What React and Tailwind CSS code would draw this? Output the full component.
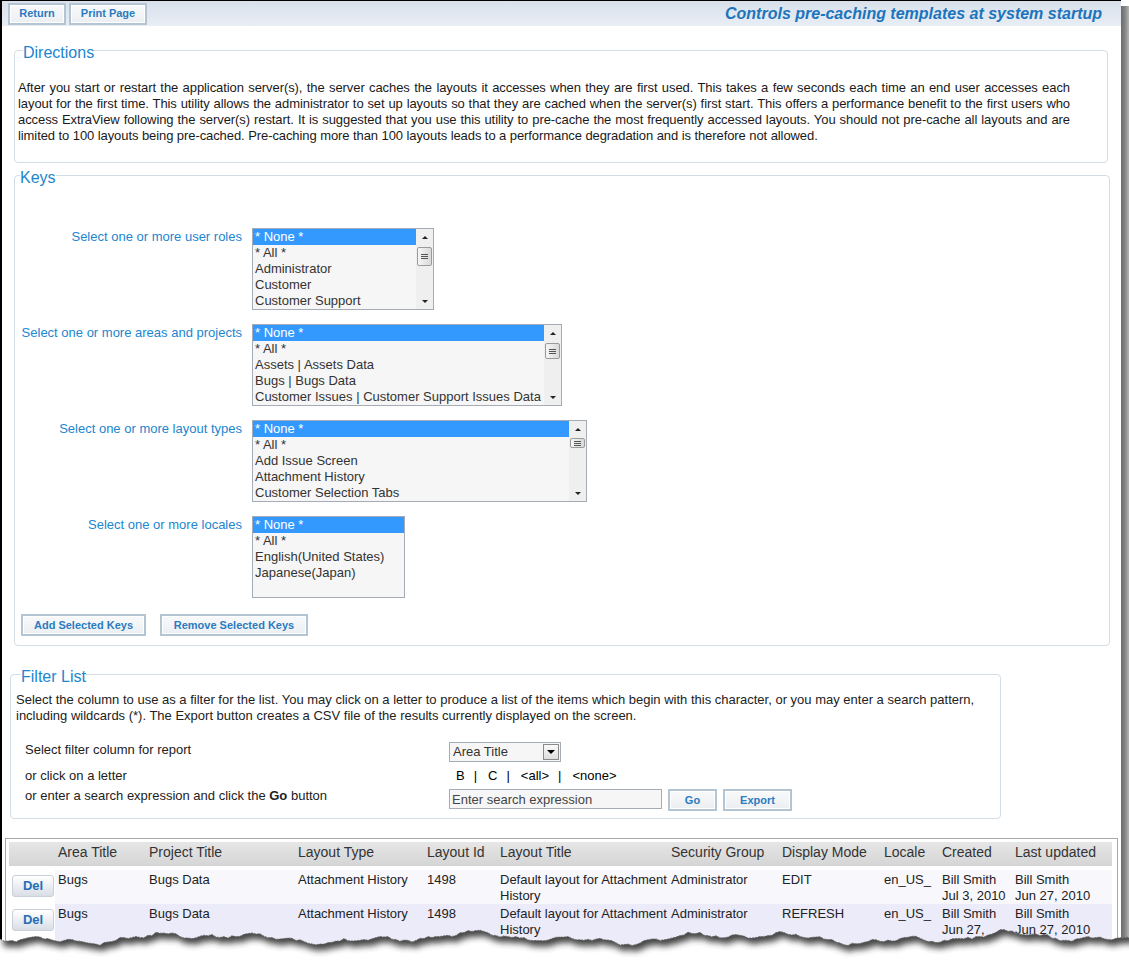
import React from 'react'

const blue = 'text-[#2086d0]'

const Btn = ({ children, className = '' }) => (
    <button
        className={`h-[22px] border-2 border-[#b3c4d2] bg-gradient-to-b from-[#f8f9fa] to-[#eceff2] text-center text-[11px] font-bold leading-none text-[#2b7bc0] shadow-[inset_0_0_0_1px_#ffffff] ${className}`}
    >
        {children}
    </button>
)

const Scrollbar = ({ thumbClass }) => (
    <div className="flex h-full w-[17px] shrink-0 flex-col items-center bg-[#efefef]">
        <div className="flex h-[16px] w-full items-center justify-center">
            <span className="block h-0 w-0 border-x-[3px] border-b-[3px] border-x-transparent border-b-[#222]" />
        </div>
        <div className={`flex w-[15px] flex-col items-center justify-center gap-[1px] rounded-[2px] border border-[#9a9a9a] bg-gradient-to-r from-[#f6f6f6] to-[#d9d9d9] ${thumbClass}`}>
            <span className="block h-px w-[7px] bg-[#555]" />
            <span className="block h-px w-[7px] bg-[#555]" />
            <span className="block h-px w-[7px] bg-[#555]" />
        </div>
        <div className="mt-auto flex h-[16px] w-full items-center justify-center">
            <span className="block h-0 w-0 border-x-[3px] border-t-[3px] border-x-transparent border-t-[#222]" />
        </div>
    </div>
)

const ListBox = ({ className, items, thumbClass }) => (
    <div className={`flex h-[82px] overflow-hidden border border-[#a5acb5] bg-[#f6f6f6] ${className}`}>
        <ul className="min-w-0 flex-1 text-[13px] leading-[16px] text-[#333]">
            {items.map((it, i) => (
                <li key={it} className={`whitespace-nowrap pl-[2px] ${i === 0 ? 'bg-[#3399ff] text-white' : ''}`}>
                    {it}
                </li>
            ))}
        </ul>
        {thumbClass && <Scrollbar thumbClass={thumbClass} />}
    </div>
)

const Legend = ({ children }) => (
    <legend className={`ml-[5px] px-0 pt-[4px] text-[16px] leading-[17px] ${blue}`}>{children}</legend>
)

const keyRows = [
    {
        label: 'Select one or more user roles',
        box: 'w-[182px]',
        thumb: 'mt-[2px] h-[19px]',
        items: ['* None *', '* All *', 'Administrator', 'Customer', 'Customer Support'],
    },
    {
        label: 'Select one or more areas and projects',
        box: 'w-[310px]',
        thumb: 'mt-[2px] h-[16px]',
        items: ['* None *', '* All *', 'Assets | Assets Data', 'Bugs | Bugs Data', 'Customer Issues | Customer Support Issues Data'],
    },
    {
        label: 'Select one or more layout types',
        box: 'w-[335px]',
        thumb: 'mt-[1px] h-[10px]',
        items: ['* None *', '* All *', 'Add Issue Screen', 'Attachment History', 'Customer Selection Tabs'],
    },
    {
        label: 'Select one or more locales',
        box: 'w-[153px]',
        thumb: null,
        items: ['* None *', '* All *', 'English(United States)', 'Japanese(Japan)'],
    },
]

const columns = [
    ['', 'w-[46px]'],
    ['Area Title', 'w-[91px]'],
    ['Project Title', 'w-[149px]'],
    ['Layout Type', 'w-[129px]'],
    ['Layout Id', 'w-[73px]'],
    ['Layout Title', 'w-[171px]'],
    ['Security Group', 'w-[111px]'],
    ['Display Mode', 'w-[102px]'],
    ['Locale', 'w-[58px]'],
    ['Created', 'w-[73px]'],
    ['Last updated', 'w-[100px]'],
]

const rows = [
    {
        bg: 'bg-[#f7f7fc]',
        cells: ['Bugs', 'Bugs Data', 'Attachment History', '1498', 'Default layout for Attachment History', 'Administrator', 'EDIT', 'en_US_', ['Bill Smith', 'Jul 3, 2010'], ['Bill Smith', 'Jun 27, 2010']],
    },
    {
        bg: 'bg-[#ebebfa]',
        cells: ['Bugs', 'Bugs Data', 'Attachment History', '1498', 'Default layout for Attachment History', 'Administrator', 'REFRESH', 'en_US_', ['Bill Smith', 'Jun 27, 2010'], ['Bill Smith', 'Jun 27, 2010']],
    },
]

const TornEdge = () => {
    let seed = 11
    const rnd = () => {
        seed = (seed * 16807) % 2147483647
        return seed / 2147483647
    }
    const pts = []
    for (let x = 0; x <= 1135; x += 4) {
        const y = 27 + 3.5 * Math.sin(x / 43) + 2.5 * Math.sin(x / 17 + 2) + 1.5 * Math.sin(x / 7) + (rnd() - 0.5) * 2.5
        pts.push(`${x === 0 ? 'M' : 'L'}${x} ${y.toFixed(1)}`)
    }
    const line = pts.join(' ')
    const below = `${line} L1135 60 L0 60 Z`
    const above = `${line} L1135 -30 L0 -30 Z`
    return (
        <svg className="pointer-events-none absolute bottom-0 left-0" width="1129" height="50" viewBox="0 0 1129 50">
            <defs>
                <filter id="tear-blur" x="-5%" y="-50%" width="110%" height="200%">
                    <feGaussianBlur stdDeviation="3" />
                </filter>
                <clipPath id="tear-below">
                    <path d={below} />
                </clipPath>
            </defs>
            <path d={below} fill="#fff" />
            <g clipPath="url(#tear-below)">
                <path d={above} fill="#333" opacity="0.9" transform="translate(3 6)" filter="url(#tear-blur)" />
            </g>
            <path d={line} fill="none" stroke="#666" strokeWidth="0.8" strokeDasharray="2 1" />
        </svg>
    )
}

export default function App() {
    return (
        <div className="relative h-[961px] w-[1129px] overflow-hidden bg-white font-['Liberation_Sans',Arial,sans-serif] text-[#222]">
            <div className="flex h-full">
                <div className="w-[1121px] shrink-0 border-l-2 border-t border-black bg-white">
                    {/* top bar */}
                    <div className="flex h-[25px] items-center bg-gradient-to-b from-[#d8e0eb] to-[#e9eef5] pl-[6px] pr-[19px]">
                        <div className="flex gap-[3px]">
                            <Btn className="w-[58px]">Return</Btn>
                            <Btn className="w-[78px]">Print Page</Btn>
                        </div>
                        <div className="ml-auto text-[16px] font-bold italic text-[#1b74bc]">
                            Controls pre-caching templates at system startup
                        </div>
                    </div>

                    {/* directions */}
                    <fieldset className="ml-[12px] mt-[14px] w-[1094px] rounded-[4px] border border-[#d3dde6] pb-[18px] pl-[3px] pr-[37px]">
                        <Legend>Directions</Legend>
                        <p className="pt-[19px] text-justify text-[13px] leading-[16px] tracking-[-0.08px] text-[#1a1a1a]">
                            After you start or restart the application server(s), the server caches the layouts it accesses when they are first used. This takes a few seconds each time an end user accesses each layout for the first time. This utility allows the administrator to set up layouts so that they are cached when the server(s) first start. This offers a performance benefit to the first users who access ExtraView following the server(s) restart. It is suggested that you use this utility to pre-cache the most frequently accessed layouts. You should not pre-cache all layouts and are limited to 100 layouts being pre-cached. Pre-caching more than 100 layouts leads to a performance degradation and is therefore not allowed.
                        </p>
                    </fieldset>

                    {/* keys */}
                    <fieldset className="ml-[12px] mt-[2px] w-[1096px] rounded-[4px] border border-[#d3dde6] pb-[9px]">
                        <Legend>Keys</Legend>
                        <div className="grid grid-cols-[227px_auto] gap-x-[10px] gap-y-[14px] pt-[42px]">
                            {keyRows.map((r) => (
                                <React.Fragment key={r.label}>
                                    <div className={`pt-px text-right text-[13px] leading-[16px] ${blue}`}>{r.label}</div>
                                    <ListBox className={r.box} items={r.items} thumbClass={r.thumb} />
                                </React.Fragment>
                            ))}
                        </div>
                        <div className="mt-[16px] flex gap-[14px] pl-[6px]">
                            <Btn className="w-[125px]">Add Selected Keys</Btn>
                            <Btn className="w-[148px]">Remove Selected Keys</Btn>
                        </div>
                    </fieldset>

                    {/* filter list */}
                    <fieldset className="ml-[8px] mt-[18px] w-[991px] rounded-[4px] border border-[#d3dde6] pb-[7px] pl-[5px]">
                        <Legend>Filter List</Legend>
                        <p className="pt-[7px] pr-[4px] text-[13px] leading-[16px]">
                            Select the column to use as a filter for the list. You may click on a letter to produce a list of the items which begin with this character, or you may enter a search pattern, including wildcards (*). The Export button creates a CSV file of the results currently displayed on the screen.
                        </p>
                        <div className="mt-[18px] grid grid-cols-[424px_auto] pl-[9px] text-[13px] leading-[16px]">
                            <div className="h-[26px]">Select filter column for report</div>
                            <div className="h-[26px]">
                                <div className="flex h-[20px] w-[112px] items-center border border-[#a5acb5] bg-[#f6f6f6] pl-[3px] text-[#333]">
                                    <span className="flex-1">Area Title</span>
                                    <span className="mr-px flex h-[16px] w-[16px] items-center justify-center border border-[#8a8a8a] bg-gradient-to-b from-[#fafafa] to-[#dedede]">
                                        <span className="block h-0 w-0 border-x-[4px] border-t-[4px] border-x-transparent border-t-black" />
                                    </span>
                                </div>
                            </div>
                            <div className="h-[20px]">or click on a letter</div>
                            <div className="flex h-[20px] pl-[7px] text-black">
                                <span>B</span>
                                <span className="ml-[9px]">|</span>
                                <span className="ml-[11px]">C</span>
                                <span className="ml-[9px]">|</span>
                                <span className="ml-[11px]">&lt;all&gt;</span>
                                <span className="ml-[9px]">|</span>
                                <span className="ml-[11px]">&lt;none&gt;</span>
                            </div>
                            <div className="h-[23px]">
                                or enter a search expression and click the <b>Go</b> button
                            </div>
                            <div className="flex h-[23px] items-start gap-[6px] pt-[1px]">
                                <input
                                    readOnly
                                    value="Enter search expression"
                                    className="h-[20px] w-[213px] border border-[#a5acb5] bg-[#f6f6f6] px-[2px] text-[13px] text-[#444] outline-none"
                                />
                                <Btn className="h-[21px] w-[49px]">Go</Btn>
                                <Btn className="h-[21px] w-[69px]">Export</Btn>
                            </div>
                        </div>
                    </fieldset>

                    {/* results table */}
                    <div className="ml-[3px] mt-[19px] w-[1113px] border border-[#a9a9a9] px-[3px] pt-[3px]">
                        <table className="w-[1103px] table-fixed border-collapse text-left">
                            <colgroup>
                                {columns.map(([h, w], i) => (
                                    <col key={i} className={w} />
                                ))}
                            </colgroup>
                            <thead>
                                <tr className="h-[24px] bg-gradient-to-b from-[#e6e6e6] to-[#d5d5d5]">
                                    {columns.map(([h], i) => (
                                        <th key={i} className="whitespace-nowrap pl-[3px] pt-[2px] align-top text-[14px] font-normal leading-[17px] text-[#333]">
                                            {h}
                                        </th>
                                    ))}
                                </tr>
                                <tr className="h-[4px]">
                                    <td colSpan={11} />
                                </tr>
                            </thead>
                            <tbody className="text-[13px] leading-[16px] text-[#222]">
                                {rows.map((r, ri) => (
                                    <tr key={ri} className="h-[34px]">
                                        <td className="bg-white pl-[3px] pt-[5px] align-top">
                                            <button className="h-[22px] w-[42px] rounded-[3px] border border-[#c9d0d9] bg-gradient-to-b from-[#ffffff] to-[#d9dee6] text-[13px] font-bold text-[#1f6fb8]">
                                                Del
                                            </button>
                                        </td>
                                        {r.cells.map((c, ci) => (
                                            <td key={ci} className={`overflow-hidden pl-[3px] pt-[2px] align-top ${r.bg}`}>
                                                {Array.isArray(c) ? (
                                                    <>
                                                        <div className="whitespace-nowrap">{c[0]}</div>
                                                        <div>{c[1]}</div>
                                                    </>
                                                ) : (
                                                    c
                                                )}
                                            </td>
                                        ))}
                                    </tr>
                                ))}
                            </tbody>
                        </table>
                    </div>
                </div>
                <div className="mt-[6px] w-[8px] shrink-0 bg-gradient-to-r from-[#6c6c6c] via-[#858585] to-[#b5b5b5]" />
            </div>
            <TornEdge />
        </div>
    )
}
